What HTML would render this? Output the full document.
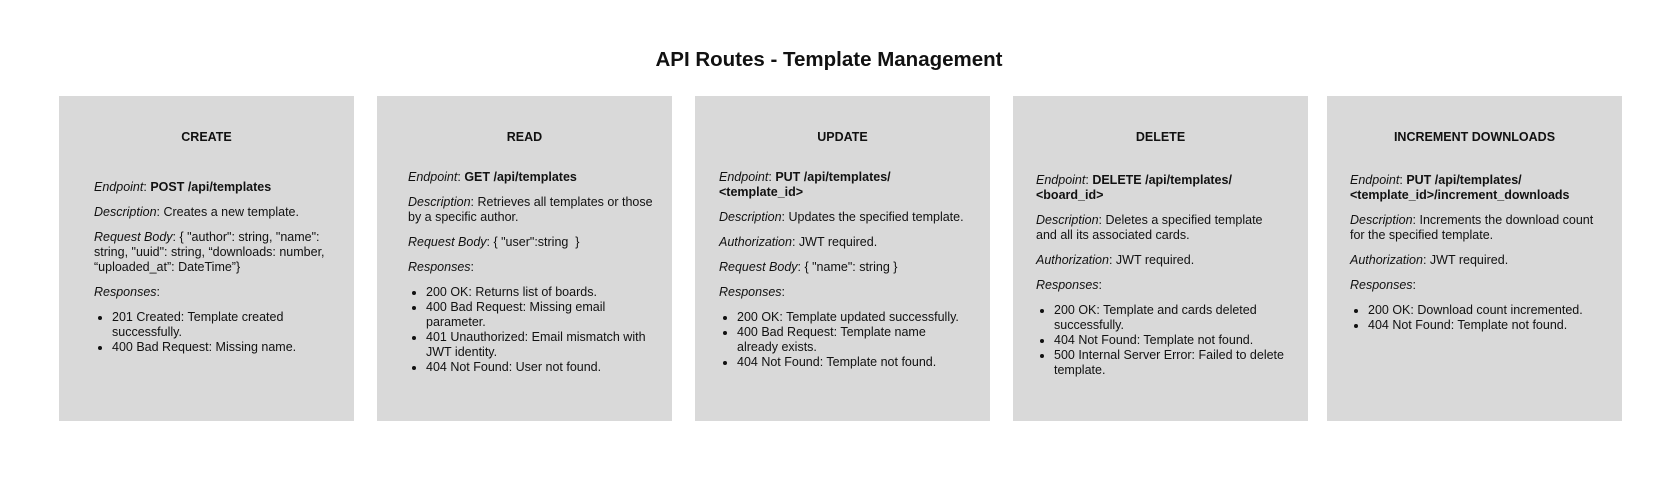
<!DOCTYPE html>
<html><head><meta charset="utf-8"><style>
*{margin:0;padding:0;box-sizing:border-box}
body{width:1658px;height:493px;background:#fff;font-family:"Liberation Sans",sans-serif;color:#111;position:relative;overflow:hidden}
h1{position:absolute;top:48px;left:0;width:1658px;text-align:center;font-size:20.5px;font-weight:bold}
.card{position:absolute;top:96px;height:325px;width:295px;background:#d9d9d9}
.t{position:absolute;top:34px;left:0;width:100%;text-align:center;font-weight:bold;font-size:12.5px;line-height:15px}
.b{position:absolute;font-size:12.5px;line-height:15px;width:260px;white-space:nowrap}
.b p{margin-bottom:10px}
.b ul{margin-left:18px;list-style:disc}
</style></head><body>
<h1>API Routes - Template Management</h1>

<div class="card" style="left:59px"><div class="t">CREATE</div>
<div class="b" style="left:35px;top:84px">
<p><i>Endpoint</i>: <b>POST /api/templates</b></p>
<p><i>Description</i>: Creates a new template.</p>
<p><i>Request Body</i>: { "author": string, "name":<br>string, "uuid": string, “downloads: number,<br>“uploaded_at”: DateTime”}</p>
<p><i>Responses</i>:</p>
<ul><li>201 Created: Template created<br>successfully.</li><li>400 Bad Request: Missing name.</li></ul>
</div></div>

<div class="card" style="left:377px"><div class="t">READ</div>
<div class="b" style="left:31px;top:74px">
<p><i>Endpoint</i>: <b>GET /api/templates</b></p>
<p><i>Description</i>: Retrieves all templates or those<br>by a specific author.</p>
<p><i>Request Body</i>: { "user":string &nbsp;}</p>
<p><i>Responses</i>:</p>
<ul><li>200 OK: Returns list of boards.</li><li>400 Bad Request: Missing email<br>parameter.</li><li>401 Unauthorized: Email mismatch with<br>JWT identity.</li><li>404 Not Found: User not found.</li></ul>
</div></div>

<div class="card" style="left:695px"><div class="t">UPDATE</div>
<div class="b" style="left:24px;top:74px">
<p><i>Endpoint</i>: <b>PUT /api/templates/<br>&lt;template_id&gt;</b></p>
<p><i>Description</i>: Updates the specified template.</p>
<p><i>Authorization</i>: JWT required.</p>
<p><i>Request Body</i>: { "name": string }</p>
<p><i>Responses</i>:</p>
<ul><li>200 OK: Template updated successfully.</li><li>400 Bad Request: Template name<br>already exists.</li><li>404 Not Found: Template not found.</li></ul>
</div></div>

<div class="card" style="left:1013px"><div class="t">DELETE</div>
<div class="b" style="left:23px;top:77px">
<p><i>Endpoint</i>: <b>DELETE /api/templates/<br>&lt;board_id&gt;</b></p>
<p><i>Description</i>: Deletes a specified template<br>and all its associated cards.</p>
<p><i>Authorization</i>: JWT required.</p>
<p><i>Responses</i>:</p>
<ul><li>200 OK: Template and cards deleted<br>successfully.</li><li>404 Not Found: Template not found.</li><li>500 Internal Server Error: Failed to delete<br>template.</li></ul>
</div></div>

<div class="card" style="left:1327px"><div class="t">INCREMENT DOWNLOADS</div>
<div class="b" style="left:23px;top:77px">
<p><i>Endpoint</i>: <b>PUT /api/templates/<br>&lt;template_id&gt;/increment_downloads</b></p>
<p><i>Description</i>: Increments the download count<br>for the specified template.</p>
<p><i>Authorization</i>: JWT required.</p>
<p><i>Responses</i>:</p>
<ul><li>200 OK: Download count incremented.</li><li>404 Not Found: Template not found.</li></ul>
</div></div>
</body></html>
